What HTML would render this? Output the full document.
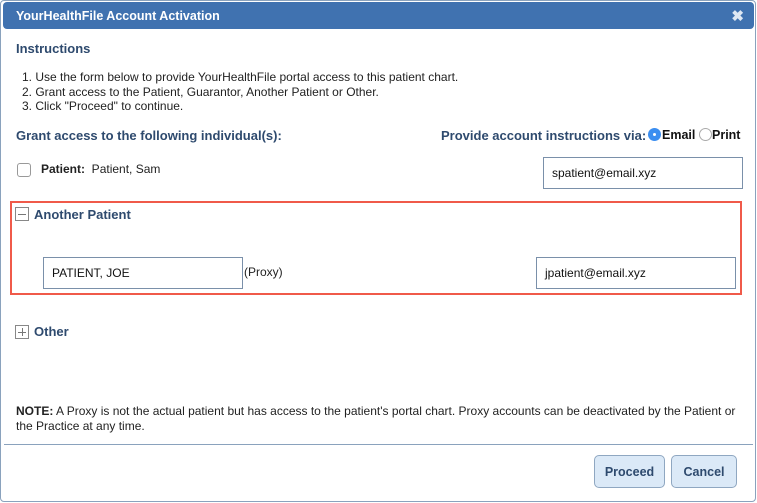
<!DOCTYPE html>
<html><head><style>
*{margin:0;padding:0;box-sizing:border-box}
body{width:757px;height:503px;background:#fff;font-family:"Liberation Sans",Arial,sans-serif;font-size:12px;color:#222;position:relative;overflow:hidden}
.dlg{position:absolute;left:0;top:0;width:756px;height:502px;border:1px solid #8aa2bd;border-radius:4px;background:#fff}
.title{position:absolute;left:3px;top:2px;width:751px;height:27px;background:#4072b0;border-radius:4px;color:#fff;font-weight:bold;font-size:12.5px;padding:7px 0 0 13px}
.x{position:absolute;right:10px;top:5px;font-size:15px;color:#dfe8f3}
.a{position:absolute;white-space:nowrap}
.h{color:#2e4a6e;font-weight:bold;font-size:13px}
.inp{position:absolute;border:1px solid #7a90aa;background:#fff;padding:0 8px;display:flex;align-items:center;font-size:12px;color:#111}
.btn{position:absolute;top:455px;height:33px;border:1px solid #8fa7c1;border-radius:5px;background:#dbe9f7;color:#2e4a6e;font-weight:bold;font-size:12.5px;display:flex;align-items:center;justify-content:center}
.sq{position:absolute;width:14px;height:14px;border:1px solid #888;background:#fff}
</style></head><body>
<div class="dlg"></div>
<div class="title">YourHealthFile Account Activation<span class="x">✖</span></div>
<div class="a h" style="left:16px;top:41px">Instructions</div>
<div class="a" style="left:22px;top:70px;line-height:14.5px">1. Use the form below to provide YourHealthFile portal access to this patient chart.<br>2. Grant access to the Patient, Guarantor, Another Patient or Other.<br>3. Click "Proceed" to continue.</div>
<div class="a h" style="left:16px;top:128px">Grant access to the following individual(s):</div>
<div class="a h" style="left:441px;top:128px">Provide account instructions via:</div>
<div class="a" style="left:648px;top:128px;width:13px;height:13px;border-radius:50%;background:#3b8ef0"><div style="position:absolute;left:5px;top:5px;width:3px;height:3px;background:#fff;border-radius:50%"></div></div>
<div class="a" style="left:662px;top:128px;font-weight:bold;font-size:12.5px;color:#111">Email</div>
<div class="a" style="left:699px;top:128px;width:13px;height:13px;border-radius:50%;border:1px solid #aaa"></div>
<div class="a" style="left:712px;top:128px;font-weight:bold;font-size:12.5px;color:#111">Print</div>
<div class="a" style="left:17px;top:163px;width:14px;height:14px;border:1px solid #999;border-radius:3px"></div>
<div class="a" style="left:41px;top:162px"><b>Patient:</b>&nbsp; Patient, Sam</div>
<div class="inp" style="left:543px;top:157px;width:200px;height:32px">spatient@email.xyz</div>
<div class="a" style="left:10px;top:201px;width:732px;height:94px;border:2px solid #f05a4a"></div>
<div class="sq" style="left:15px;top:207px"><div style="position:absolute;left:2px;top:6px;width:8px;height:1px;background:#777"></div></div>
<div class="a h" style="left:34px;top:207px">Another Patient</div>
<div class="inp" style="left:43px;top:257px;width:200px;height:32px">PATIENT, JOE</div>
<div class="a" style="left:244px;top:265px">(Proxy)</div>
<div class="inp" style="left:536px;top:257px;width:200px;height:32px">jpatient@email.xyz</div>
<div class="sq" style="left:15px;top:325px"><div style="position:absolute;left:2px;top:6px;width:8px;height:1px;background:#777"></div><div style="position:absolute;left:6px;top:2px;width:1px;height:8px;background:#777"></div></div>
<div class="a h" style="left:34px;top:324px">Other</div>
<div class="a" style="left:16px;top:404px;line-height:15px"><b>NOTE:</b> A Proxy is not the actual patient but has access to the patient's portal chart. Proxy accounts can be deactivated by the Patient or<br>the Practice at any time.</div>
<div class="a" style="left:4px;top:444px;width:749px;height:1px;background:#8aa2bd"></div>
<div class="btn" style="left:594px;width:71px">Proceed</div>
<div class="btn" style="left:671px;width:66px">Cancel</div>
</body></html>
